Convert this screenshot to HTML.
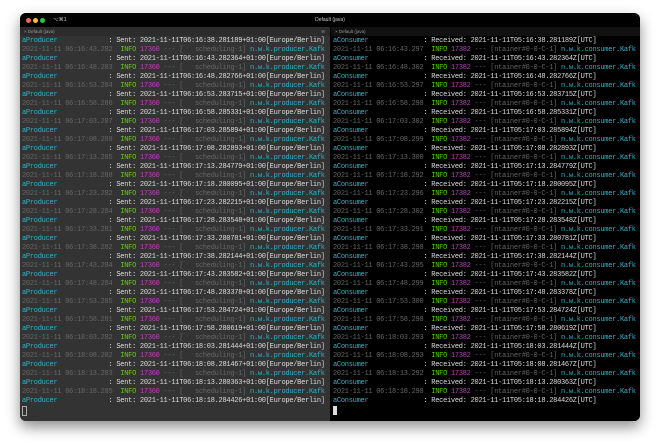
<!DOCTYPE html>
<html><head><meta charset="utf-8"><style>
body{margin:0;width:660px;height:448px;background:#fff;overflow:hidden;position:relative;font-family:"Liberation Mono",monospace}
.win{position:absolute;left:20px;top:13px;width:620px;height:408px;border-radius:6px;overflow:hidden;background:#000;box-shadow:0 6px 14px rgba(0,0,0,.45)}
.title{position:absolute;left:0;top:0;width:620px;height:14px;background:#000;color:#ccc;font:5px "Liberation Sans",sans-serif}
.dot{position:absolute;top:4.5px;width:5px;height:5px;border-radius:50%}
.pane{position:absolute;top:14px;height:394px}
.lp{left:0;width:310px;background:#333}
.rp{left:311px;width:309px;background:#000}
.tab{height:9px;font:4.5px "Liberation Sans",sans-serif;color:#999;line-height:9px;padding-left:4px;background:#2c2c2c}
.rp .tab{background:#111}
pre{margin:0;padding:1px 0 0 2px;font-size:7px;letter-spacing:-0.27px;line-height:9px;color:#ddd;font-family:"Liberation Mono",monospace;white-space:pre;overflow:hidden}
.c{color:#2fb3c8}.d{color:#666}.g{color:#5fd000}.m{color:#c23ec2}.t{color:#2fb3c8}
.cur{display:inline-block;width:3px;height:8px;border:1px solid #aaa;vertical-align:top;margin-top:0px}
.cur2{display:inline-block;width:3.5px;height:9px;background:#ddd;vertical-align:top}
</style></head><body>
<div class="win">
<div class="title">
<div class="dot" style="left:6px;background:#fd5f57"></div>
<div class="dot" style="left:13px;background:#febc2e"></div>
<div class="dot" style="left:20px;background:#28c840"></div>
<span style="position:absolute;left:33px;top:4px">⌥⌘1</span>
<span style="position:absolute;left:0;width:620px;text-align:center;top:4px">Default (java)</span>
</div>
<div class="pane lp"><div class="tab">× Default (java)<span style="position:absolute;right:5px">⊖</span></div>
<pre><span class="c">aProducer</span>             : Sent: 2021-11-11T06:16:38.281189+01:00[Europe/Berlin]
<span class="d">2021-11-11 06:16:43.282</span>  <span class="g">INFO</span> <span class="m">17360</span> <span class="d">--- [   scheduling-1]</span> <span class="t">n.w.k.producer.Kafk</span>
<span class="c">aProducer</span>             : Sent: 2021-11-11T06:16:43.282364+01:00[Europe/Berlin]
<span class="d">2021-11-11 06:16:48.283</span>  <span class="g">INFO</span> <span class="m">17360</span> <span class="d">--- [   scheduling-1]</span> <span class="t">n.w.k.producer.Kafk</span>
<span class="c">aProducer</span>             : Sent: 2021-11-11T06:16:48.282766+01:00[Europe/Berlin]
<span class="d">2021-11-11 06:16:53.284</span>  <span class="g">INFO</span> <span class="m">17360</span> <span class="d">--- [   scheduling-1]</span> <span class="t">n.w.k.producer.Kafk</span>
<span class="c">aProducer</span>             : Sent: 2021-11-11T06:16:53.283715+01:00[Europe/Berlin]
<span class="d">2021-11-11 06:16:58.286</span>  <span class="g">INFO</span> <span class="m">17360</span> <span class="d">--- [   scheduling-1]</span> <span class="t">n.w.k.producer.Kafk</span>
<span class="c">aProducer</span>             : Sent: 2021-11-11T06:16:58.285331+01:00[Europe/Berlin]
<span class="d">2021-11-11 06:17:03.287</span>  <span class="g">INFO</span> <span class="m">17360</span> <span class="d">--- [   scheduling-1]</span> <span class="t">n.w.k.producer.Kafk</span>
<span class="c">aProducer</span>             : Sent: 2021-11-11T06:17:03.285894+01:00[Europe/Berlin]
<span class="d">2021-11-11 06:17:08.289</span>  <span class="g">INFO</span> <span class="m">17360</span> <span class="d">--- [   scheduling-1]</span> <span class="t">n.w.k.producer.Kafk</span>
<span class="c">aProducer</span>             : Sent: 2021-11-11T06:17:08.282893+01:00[Europe/Berlin]
<span class="d">2021-11-11 06:17:13.285</span>  <span class="g">INFO</span> <span class="m">17360</span> <span class="d">--- [   scheduling-1]</span> <span class="t">n.w.k.producer.Kafk</span>
<span class="c">aProducer</span>             : Sent: 2021-11-11T06:17:13.284779+01:00[Europe/Berlin]
<span class="d">2021-11-11 06:17:18.288</span>  <span class="g">INFO</span> <span class="m">17360</span> <span class="d">--- [   scheduling-1]</span> <span class="t">n.w.k.producer.Kafk</span>
<span class="c">aProducer</span>             : Sent: 2021-11-11T06:17:18.280095+01:00[Europe/Berlin]
<span class="d">2021-11-11 06:17:23.282</span>  <span class="g">INFO</span> <span class="m">17360</span> <span class="d">--- [   scheduling-1]</span> <span class="t">n.w.k.producer.Kafk</span>
<span class="c">aProducer</span>             : Sent: 2021-11-11T06:17:23.282215+01:00[Europe/Berlin]
<span class="d">2021-11-11 06:17:28.284</span>  <span class="g">INFO</span> <span class="m">17360</span> <span class="d">--- [   scheduling-1]</span> <span class="t">n.w.k.producer.Kafk</span>
<span class="c">aProducer</span>             : Sent: 2021-11-11T06:17:28.283548+01:00[Europe/Berlin]
<span class="d">2021-11-11 06:17:33.281</span>  <span class="g">INFO</span> <span class="m">17360</span> <span class="d">--- [   scheduling-1]</span> <span class="t">n.w.k.producer.Kafk</span>
<span class="c">aProducer</span>             : Sent: 2021-11-11T06:17:33.280781+01:00[Europe/Berlin]
<span class="d">2021-11-11 06:17:38.282</span>  <span class="g">INFO</span> <span class="m">17360</span> <span class="d">--- [   scheduling-1]</span> <span class="t">n.w.k.producer.Kafk</span>
<span class="c">aProducer</span>             : Sent: 2021-11-11T06:17:38.282144+01:00[Europe/Berlin]
<span class="d">2021-11-11 06:17:43.284</span>  <span class="g">INFO</span> <span class="m">17360</span> <span class="d">--- [   scheduling-1]</span> <span class="t">n.w.k.producer.Kafk</span>
<span class="c">aProducer</span>             : Sent: 2021-11-11T06:17:43.283582+01:00[Europe/Berlin]
<span class="d">2021-11-11 06:17:48.284</span>  <span class="g">INFO</span> <span class="m">17360</span> <span class="d">--- [   scheduling-1]</span> <span class="t">n.w.k.producer.Kafk</span>
<span class="c">aProducer</span>             : Sent: 2021-11-11T06:17:48.283378+01:00[Europe/Berlin]
<span class="d">2021-11-11 06:17:53.285</span>  <span class="g">INFO</span> <span class="m">17360</span> <span class="d">--- [   scheduling-1]</span> <span class="t">n.w.k.producer.Kafk</span>
<span class="c">aProducer</span>             : Sent: 2021-11-11T06:17:53.284724+01:00[Europe/Berlin]
<span class="d">2021-11-11 06:17:58.281</span>  <span class="g">INFO</span> <span class="m">17360</span> <span class="d">--- [   scheduling-1]</span> <span class="t">n.w.k.producer.Kafk</span>
<span class="c">aProducer</span>             : Sent: 2021-11-11T06:17:58.280619+01:00[Europe/Berlin]
<span class="d">2021-11-11 06:18:03.282</span>  <span class="g">INFO</span> <span class="m">17360</span> <span class="d">--- [   scheduling-1]</span> <span class="t">n.w.k.producer.Kafk</span>
<span class="c">aProducer</span>             : Sent: 2021-11-11T06:18:03.281444+01:00[Europe/Berlin]
<span class="d">2021-11-11 06:18:08.282</span>  <span class="g">INFO</span> <span class="m">17360</span> <span class="d">--- [   scheduling-1]</span> <span class="t">n.w.k.producer.Kafk</span>
<span class="c">aProducer</span>             : Sent: 2021-11-11T06:18:08.281467+01:00[Europe/Berlin]
<span class="d">2021-11-11 06:18:13.283</span>  <span class="g">INFO</span> <span class="m">17360</span> <span class="d">--- [   scheduling-1]</span> <span class="t">n.w.k.producer.Kafk</span>
<span class="c">aProducer</span>             : Sent: 2021-11-11T06:18:13.280363+01:00[Europe/Berlin]
<span class="d">2021-11-11 06:18:18.285</span>  <span class="g">INFO</span> <span class="m">17360</span> <span class="d">--- [   scheduling-1]</span> <span class="t">n.w.k.producer.Kafk</span>
<span class="c">aProducer</span>             : Sent: 2021-11-11T06:18:18.284426+01:00[Europe/Berlin]
<span class="cur"></span></pre>
</div>
<div class="pane rp"><div class="tab">× Default (java)</div>
<pre><span class="c">aConsumer</span>              : Received: 2021-11-11T05:16:38.281189Z[UTC]
<span class="d">2021-11-11 06:16:43.297</span>  <span class="g">INFO</span> <span class="m">17382</span> <span class="d">--- [ntainer#0-0-C-1]</span> <span class="t">n.w.k.consumer.Kafk</span>
<span class="c">aConsumer</span>              : Received: 2021-11-11T05:16:43.282364Z[UTC]
<span class="d">2021-11-11 06:16:48.302</span>  <span class="g">INFO</span> <span class="m">17382</span> <span class="d">--- [ntainer#0-0-C-1]</span> <span class="t">n.w.k.consumer.Kafk</span>
<span class="c">aConsumer</span>              : Received: 2021-11-11T05:16:48.282766Z[UTC]
<span class="d">2021-11-11 06:16:53.297</span>  <span class="g">INFO</span> <span class="m">17382</span> <span class="d">--- [ntainer#0-0-C-1]</span> <span class="t">n.w.k.consumer.Kafk</span>
<span class="c">aConsumer</span>              : Received: 2021-11-11T05:16:53.283715Z[UTC]
<span class="d">2021-11-11 06:16:58.298</span>  <span class="g">INFO</span> <span class="m">17382</span> <span class="d">--- [ntainer#0-0-C-1]</span> <span class="t">n.w.k.consumer.Kafk</span>
<span class="c">aConsumer</span>              : Received: 2021-11-11T05:16:58.285331Z[UTC]
<span class="d">2021-11-11 06:17:03.302</span>  <span class="g">INFO</span> <span class="m">17382</span> <span class="d">--- [ntainer#0-0-C-1]</span> <span class="t">n.w.k.consumer.Kafk</span>
<span class="c">aConsumer</span>              : Received: 2021-11-11T05:17:03.285894Z[UTC]
<span class="d">2021-11-11 06:17:08.299</span>  <span class="g">INFO</span> <span class="m">17382</span> <span class="d">--- [ntainer#0-0-C-1]</span> <span class="t">n.w.k.consumer.Kafk</span>
<span class="c">aConsumer</span>              : Received: 2021-11-11T05:17:08.282893Z[UTC]
<span class="d">2021-11-11 06:17:13.300</span>  <span class="g">INFO</span> <span class="m">17382</span> <span class="d">--- [ntainer#0-0-C-1]</span> <span class="t">n.w.k.consumer.Kafk</span>
<span class="c">aConsumer</span>              : Received: 2021-11-11T05:17:13.284779Z[UTC]
<span class="d">2021-11-11 06:17:18.292</span>  <span class="g">INFO</span> <span class="m">17382</span> <span class="d">--- [ntainer#0-0-C-1]</span> <span class="t">n.w.k.consumer.Kafk</span>
<span class="c">aConsumer</span>              : Received: 2021-11-11T05:17:18.280095Z[UTC]
<span class="d">2021-11-11 06:17:23.296</span>  <span class="g">INFO</span> <span class="m">17382</span> <span class="d">--- [ntainer#0-0-C-1]</span> <span class="t">n.w.k.consumer.Kafk</span>
<span class="c">aConsumer</span>              : Received: 2021-11-11T05:17:23.282215Z[UTC]
<span class="d">2021-11-11 06:17:28.302</span>  <span class="g">INFO</span> <span class="m">17382</span> <span class="d">--- [ntainer#0-0-C-1]</span> <span class="t">n.w.k.consumer.Kafk</span>
<span class="c">aConsumer</span>              : Received: 2021-11-11T05:17:28.283548Z[UTC]
<span class="d">2021-11-11 06:17:33.291</span>  <span class="g">INFO</span> <span class="m">17382</span> <span class="d">--- [ntainer#0-0-C-1]</span> <span class="t">n.w.k.consumer.Kafk</span>
<span class="c">aConsumer</span>              : Received: 2021-11-11T05:17:33.280781Z[UTC]
<span class="d">2021-11-11 06:17:38.298</span>  <span class="g">INFO</span> <span class="m">17382</span> <span class="d">--- [ntainer#0-0-C-1]</span> <span class="t">n.w.k.consumer.Kafk</span>
<span class="c">aConsumer</span>              : Received: 2021-11-11T05:17:38.282144Z[UTC]
<span class="d">2021-11-11 06:17:43.295</span>  <span class="g">INFO</span> <span class="m">17382</span> <span class="d">--- [ntainer#0-0-C-1]</span> <span class="t">n.w.k.consumer.Kafk</span>
<span class="c">aConsumer</span>              : Received: 2021-11-11T05:17:43.283582Z[UTC]
<span class="d">2021-11-11 06:17:48.299</span>  <span class="g">INFO</span> <span class="m">17382</span> <span class="d">--- [ntainer#0-0-C-1]</span> <span class="t">n.w.k.consumer.Kafk</span>
<span class="c">aConsumer</span>              : Received: 2021-11-11T05:17:48.283378Z[UTC]
<span class="d">2021-11-11 06:17:53.300</span>  <span class="g">INFO</span> <span class="m">17382</span> <span class="d">--- [ntainer#0-0-C-1]</span> <span class="t">n.w.k.consumer.Kafk</span>
<span class="c">aConsumer</span>              : Received: 2021-11-11T05:17:53.284724Z[UTC]
<span class="d">2021-11-11 06:17:58.298</span>  <span class="g">INFO</span> <span class="m">17382</span> <span class="d">--- [ntainer#0-0-C-1]</span> <span class="t">n.w.k.consumer.Kafk</span>
<span class="c">aConsumer</span>              : Received: 2021-11-11T05:17:58.280619Z[UTC]
<span class="d">2021-11-11 06:18:03.293</span>  <span class="g">INFO</span> <span class="m">17382</span> <span class="d">--- [ntainer#0-0-C-1]</span> <span class="t">n.w.k.consumer.Kafk</span>
<span class="c">aConsumer</span>              : Received: 2021-11-11T05:18:03.281444Z[UTC]
<span class="d">2021-11-11 06:18:08.293</span>  <span class="g">INFO</span> <span class="m">17382</span> <span class="d">--- [ntainer#0-0-C-1]</span> <span class="t">n.w.k.consumer.Kafk</span>
<span class="c">aConsumer</span>              : Received: 2021-11-11T05:18:08.281467Z[UTC]
<span class="d">2021-11-11 06:18:13.292</span>  <span class="g">INFO</span> <span class="m">17382</span> <span class="d">--- [ntainer#0-0-C-1]</span> <span class="t">n.w.k.consumer.Kafk</span>
<span class="c">aConsumer</span>              : Received: 2021-11-11T05:18:13.280363Z[UTC]
<span class="d">2021-11-11 06:18:18.298</span>  <span class="g">INFO</span> <span class="m">17382</span> <span class="d">--- [ntainer#0-0-C-1]</span> <span class="t">n.w.k.consumer.Kafk</span>
<span class="c">aConsumer</span>              : Received: 2021-11-11T05:18:18.284426Z[UTC]
<span class="cur2"></span></pre>
</div>
</div>
</body></html>
